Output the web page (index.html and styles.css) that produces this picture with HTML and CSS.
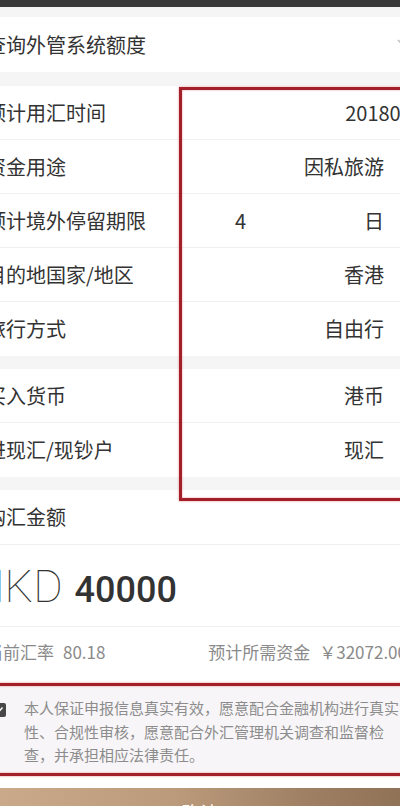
FILE: index.html
```html
<!DOCTYPE html>
<html lang="zh-CN">
<head>
<meta charset="utf-8">
<title>购汇</title>
<link rel="stylesheet" href="styles.css">
</head>
<body>
<div class="screen">
  <div class="page">
    <div class="statusbar"></div>
    <div class="band band-top"></div>
    <div class="row row-select">
      <span class="label">查询外管系统额度</span>
      <svg class="chev-down" viewBox="0 0 20 12" width="20" height="12"><path d="M1 1 L10 10 L19 1" fill="none" stroke="#c4c4c4" stroke-width="1.6"/></svg>
    </div>
    <div class="band"></div>
    <div class="group">
      <div class="row"><span class="label">预计用汇时间</span><span class="value value-date">20180816</span></div>
      <div class="row"><span class="label">资金用途</span><span class="value">因私旅游</span><svg class="chev" viewBox="0 0 10 16" width="10" height="16"><path d="M1 1 L8 8 L1 15" fill="none" stroke="#e2e2e2" stroke-width="1.5"/></svg></div>
      <div class="row"><span class="label label-fixed">预计境外停留期限</span><span class="num">4</span><span class="value">日</span><span class="chev-space"></span></div>
      <div class="row"><span class="label">目的地国家/地区</span><span class="value">香港</span><svg class="chev" viewBox="0 0 10 16" width="10" height="16"><path d="M1 1 L8 8 L1 15" fill="none" stroke="#e2e2e2" stroke-width="1.5"/></svg></div>
      <div class="row"><span class="label">旅行方式</span><span class="value">自由行</span><svg class="chev" viewBox="0 0 10 16" width="10" height="16"><path d="M1 1 L8 8 L1 15" fill="none" stroke="#e2e2e2" stroke-width="1.5"/></svg></div>
    </div>
    <div class="band"></div>
    <div class="group">
      <div class="row"><span class="label">买入货币</span><span class="value">港币</span><svg class="chev" viewBox="0 0 10 16" width="10" height="16"><path d="M1 1 L8 8 L1 15" fill="none" stroke="#e2e2e2" stroke-width="1.5"/></svg></div>
      <div class="row"><span class="label">进现汇/现钞户</span><span class="value">现汇</span><svg class="chev" viewBox="0 0 10 16" width="10" height="16"><path d="M1 1 L8 8 L1 15" fill="none" stroke="#e2e2e2" stroke-width="1.5"/></svg></div>
    </div>
    <div class="band"></div>
    <div class="row row-title"><span class="label">购汇金额</span></div>
    <div class="amount-row"><span class="currency">HKD</span><span class="amount">40000</span></div>
    <div class="rate-row">
      <span class="rate">当前汇率<span class="rate-num">80.18</span></span>
      <span class="need">预计所需资金<span class="need-num">￥32072.00</span></span>
    </div>
    <div class="spacer"></div>
    <div class="agree">
      <span class="checkbox"><svg viewBox="0 0 14 14" width="14" height="14"><path d="M3.5 7.2 L6 9.6 L10.5 4.6" fill="none" stroke="#fff" stroke-width="1.5"/></svg></span>
      <p class="agree-text">本人保证申报信息真实有效，愿意配合金融机构进行真实性、合规性审核，愿意配合外汇管理机关调查和监督检查，并承担相应法律责任。</p>
    </div>
    <div class="spacer spacer-bottom"></div>
    <div class="submit">确认</div>
  </div>
  <div class="mark mark-fields"></div>
  <div class="mark mark-agree"></div>
</div>
</body>
</html>
```
FILE: styles.css
```css
html, body {
  margin: 0;
  padding: 0;
  background: #ffffff;
}

.screen {
  position: relative;
  width: 400px;
  height: 806px;
  overflow: hidden;
  font-family: "Noto Sans CJK SC", "Noto Sans", sans-serif;
  color: #333333;
}

.page {
  margin-left: -30px;
  width: 460px;
}

.statusbar {
  height: 7px;
  background: #393939;
}

.band {
  height: 14px;
  background: #f5f5f5;
}

.band-top {
  height: 10px;
}

.group + .band {
  height: 13px;
}

.row {
  display: flex;
  align-items: center;
  box-sizing: border-box;
  height: 54px;
  padding: 0 18px 0 16px;
  border-bottom: 1px solid #f0f0f0;
  font-size: 20px;
  line-height: 1;
  background: #ffffff;
}

.group .row:last-child {
  border-bottom: none;
}

.row-select {
  height: 55px;
  border-bottom: none;
}

.row-title {
  height: 55px;
}

.label {
  flex: 1 1 auto;
  white-space: nowrap;
}

.label-fixed {
  flex: 0 0 249px;
}

.num {
  flex: 1 1 auto;
}

.value {
  flex: 0 0 auto;
  white-space: nowrap;
}

.value-date {
  margin-right: -22px;
}

.chev {
  flex: 0 0 auto;
  margin-left: 16px;
  margin-right: 2px;
}

.chev-space {
  flex: 0 0 10px;
  margin-left: 16px;
  margin-right: 2px;
}

.chev-down {
  flex: 0 0 auto;
  margin-right: -5px;
}

.amount-row {
  display: flex;
  align-items: baseline;
  box-sizing: border-box;
  height: 82px;
  padding: 19px 16px 0 16px;
  border-bottom: 1px solid #f0f0f0;
  color: #333333;
}

.currency {
  font-family: Roboto, "Liberation Sans", sans-serif;
  font-weight: 100;
  font-size: 45px;
  line-height: 1;
  margin-left: -13px;
}

.amount {
  font-family: Roboto, "Liberation Sans", sans-serif;
  font-weight: 500;
  font-size: 36px;
  line-height: 1;
  margin-left: 12px;
}

.rate-row {
  display: flex;
  align-items: center;
  justify-content: space-between;
  box-sizing: border-box;
  height: 49px;
  padding: 0 16px;
  font-size: 17px;
  line-height: 1;
  color: #8a8a8a;
}

.rate-num {
  margin-left: 9px;
}

.need {
  white-space: nowrap;
  margin-right: 7px;
}

.need-num {
  margin-left: 9px;
}

.spacer {
  height: 8px;
}

.spacer-bottom {
  height: 13px;
}

.agree {
  display: flex;
  align-items: flex-start;
  box-sizing: border-box;
  height: 91px;
  padding: 12px 16px 0 16px;
  background: #f7f5f8;
}

.checkbox {
  flex: 0 0 14px;
  width: 14px;
  height: 14px;
  margin-left: 6px;
  margin-top: 7px;
  border-radius: 2px;
  background: #474747;
  display: flex;
}

.agree-text {
  margin: 0 0 0 18px;
  width: 378px;
  flex: 0 0 378px;
  font-size: 15px;
  line-height: 23.5px;
  color: #8c8c8c;
}

.submit {
  height: 48px;
  line-height: 48px;
  text-align: center;
  font-size: 18px;
  color: #ffffff;
  background: linear-gradient(90deg, #cdac8d 0%, #bb9a7b 45%, #9d7e62 75%, #8c6e54 100%);
}

.mark {
  position: absolute;
  box-sizing: border-box;
  border: 3.5px solid #a3202b;
  box-shadow: 0 0 2px rgba(210, 60, 70, 0.6), inset 0 0 2px rgba(210, 60, 70, 0.6);
  pointer-events: none;
}

.mark-fields {
  left: 179px;
  top: 87px;
  width: 260px;
  height: 414px;
}

.mark-agree {
  left: -10px;
  top: 683px;
  width: 430px;
  height: 93px;
  border-width: 3px;
}
```
